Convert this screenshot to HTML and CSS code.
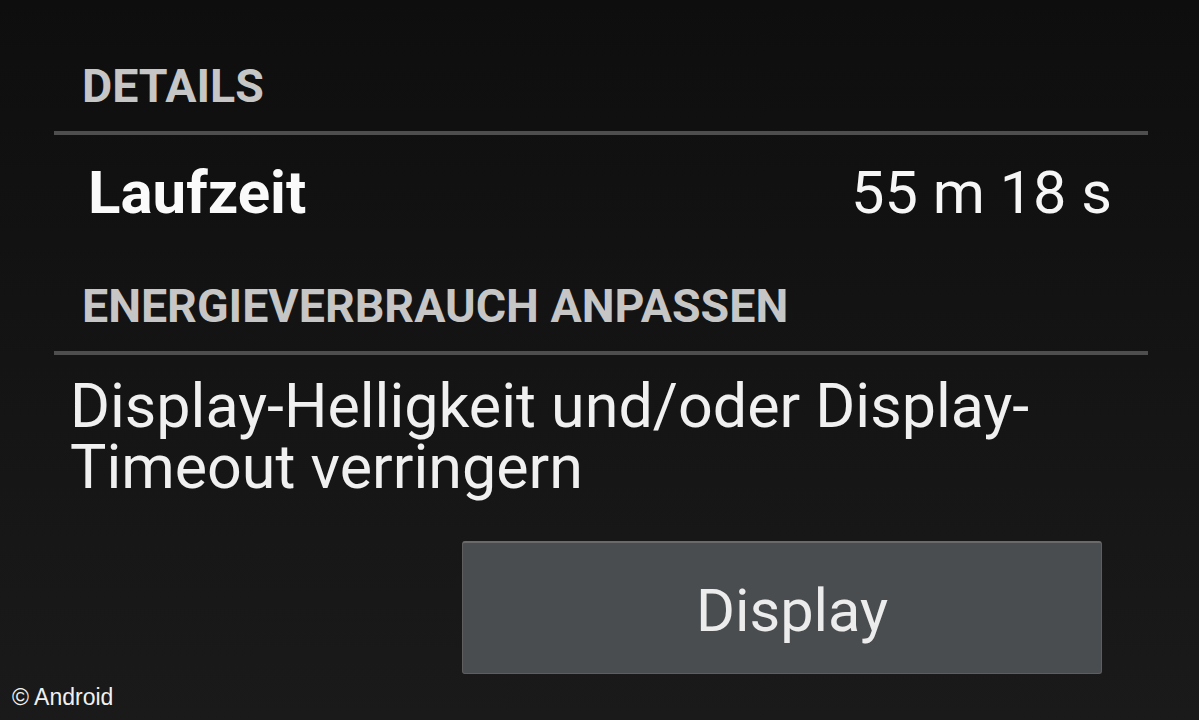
FILE: index.html
```html
<!DOCTYPE html>
<html>
<head>
<meta charset="utf-8">
<link rel="stylesheet" href="styles.css">
</head>
<body>
<div class="screen">
  <div class="header">DETAILS</div>
  <div class="divider"></div>
  <div class="row">
    <span class="label">Laufzeit</span>
    <span class="value">55 m 18 s</span>
  </div>
  <div class="header header2">ENERGIEVERBRAUCH ANPASSEN</div>
  <div class="divider"></div>
  <div class="desc">Display-Helligkeit und/oder Display-<br>Timeout verringern</div>
  <div class="btnrow">
    <div class="btn">Display</div>
  </div>
  <div class="credit">© Android</div>
</div>
</body>
</html>
```
FILE: styles.css
```css
html, body {
  margin: 0;
  padding: 0;
  width: 1199px;
  height: 720px;
  overflow: hidden;
}
body {
  background: linear-gradient(#0e0e0e, #1a1a1a);
  font-family: Roboto, "Noto Sans", sans-serif;
  color: #f2f2f2;
}
.screen {
  position: relative;
  width: 1199px;
  height: 720px;
  display: flex;
  flex-direction: column;
}
.header {
  font-weight: bold;
  font-size: 46.5px;
  color: #c6c6c6;
  padding: 56px 0 0 82px;
  line-height: 60px;
  height: 60px;
}
.header2 {
  padding-top: 0;
  margin-top: 43px;
}
.divider {
  margin: 15px 51px 0 54px;
  height: 4px;
  background: #4e4e4e;
}
.row {
  display: flex;
  justify-content: space-between;
  align-items: baseline;
  padding: 0 87px 0 88px;
  margin-top: 18px;
  height: 80px;
  line-height: 80px;
}
.label {
  font-weight: bold;
  font-size: 60px;
  color: #fafafa;
}
.value {
  font-size: 59.5px;
  color: #f6f6f6;
}
.desc {
  font-size: 61px;
  line-height: 61px;
  padding-left: 70px;
  margin-top: 21px;
  color: #f0f0f0;
}
.btnrow {
  display: flex;
  justify-content: flex-end;
  padding-right: 97px;
  margin-top: 43px;
}
.btn {
  width: 640px;
  height: 133px;
  background: #4a4d50;
  border: 1px solid #5e5e5e;
  border-top: 2px solid #6a6a6a;
  border-radius: 3px;
  box-sizing: border-box;
  display: flex;
  align-items: center;
  justify-content: center;
  font-size: 59.5px;
  color: #ececec;
  padding: 6px 0 0 20px;
}
.credit {
  position: absolute;
  left: 12px;
  top: 684px;
  font-family: "Liberation Sans", Arial, sans-serif;
  font-size: 23px;
  color: #f0f0f0;
}
```
